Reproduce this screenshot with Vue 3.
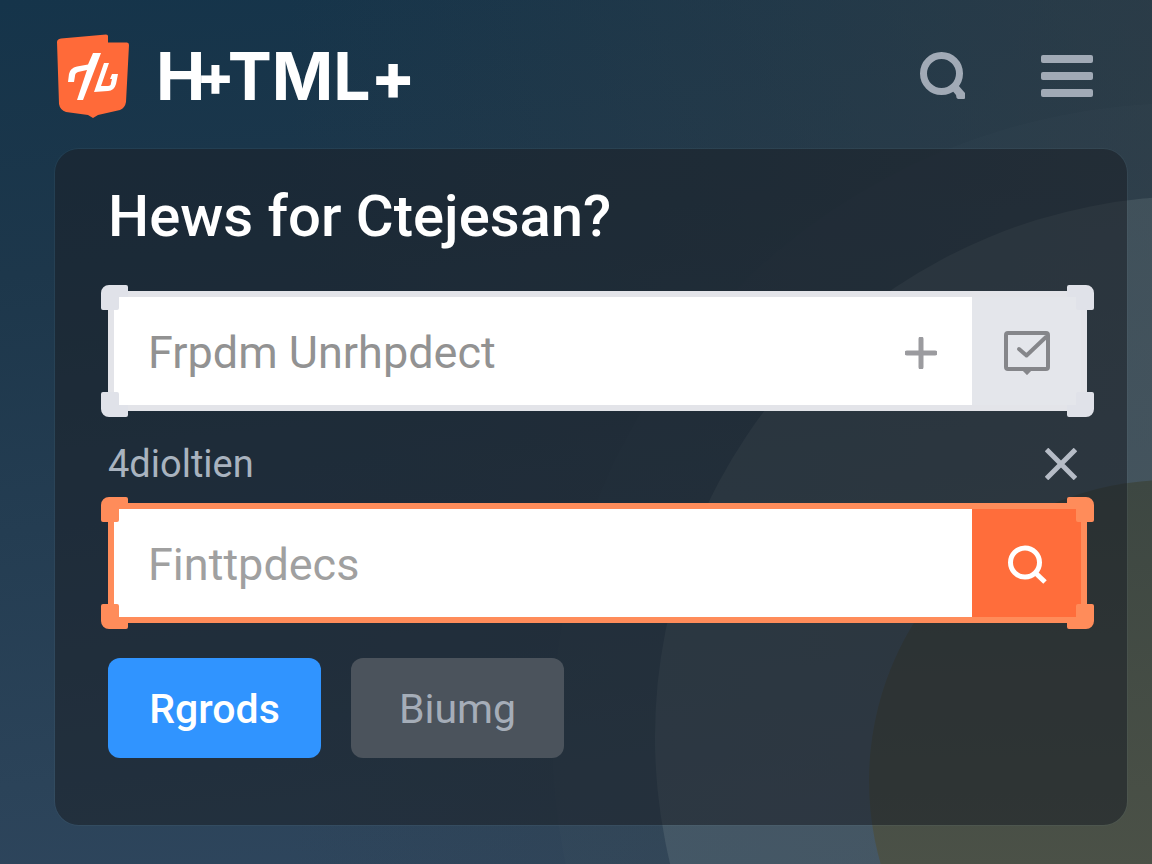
<script setup>
import { ref } from 'vue'

const project = ref('')
const query = ref('')
const corners = ['tl', 'tr', 'bl', 'br']
const cornerPath = 'M8 0H25a2 2 0 0 1 2 2V12H18V23a2 2 0 0 1-2 2H2a2 2 0 0 1-2-2V8a8 8 0 0 1 8-8z'
</script>

<template>
  <div class="page">
    <svg class="rings" width="640" height="864" viewBox="512 0 640 864" aria-hidden="true">
      <defs>
        <linearGradient id="moss" x1="0" y1="0" x2="0" y2="1">
          <stop offset="0" stop-color="#3d4742" />
          <stop offset="0.650" stop-color="#4b5147" />
        </linearGradient>
      </defs>
      <circle cx="1184" cy="735" r="632" fill="#fff" fill-opacity="0.012" />
      <circle cx="1196" cy="737" r="541" fill="#98a4a4" fill-opacity="0.18" />
      <circle cx="1170" cy="781" r="301" fill="url(#moss)" />
    </svg>

    <header class="bar">
      <a class="brand" href="#" aria-label="H+TML+">
        <svg class="logo" width="72" height="84" viewBox="0 0 72 84" aria-hidden="true">
          <path d="M0 8Q0 5 4 4.500L49 0.500Q51 0.500 51 2V8.500H70Q72 8.500 72 11L69 68Q68 74 63 76L41 81L36 84L31 81L9 78Q3 76 2 70Z" fill="#ff6a39" />
          <path d="M11 48L12 40Q13 34 20 32.500L31 30.500L36 19H44L26 66H20L30 36L21 38Q18 39 18 42L17 48Z" fill="#fff" />
          <path d="M47 29H52L44 52H51Q54 52 54 49L55 45H53L55 40H61L59 50Q57 57 51 57L37 58Z" fill="#fff" />
        </svg>
        <span class="word">H<span class="joint">+</span>TML<span class="plus">+</span></span>
      </a>
      <nav class="actions">
        <button class="icon" type="button" aria-label="Search">
          <svg width="46" height="48" viewBox="0 0 46 48">
            <circle cx="21.500" cy="21.500" r="18" fill="none" stroke="#a1aab6" stroke-width="7" />
            <path d="M31 37L38 33L45 41V46Q45 47 44 47H38Q36 46 36 43Z" fill="#a1aab6" />
          </svg>
        </button>
        <button class="icon" type="button" aria-label="Menu">
          <svg width="52" height="42" viewBox="0 0 52 42" fill="#a1aab6">
            <rect width="52" height="8" rx="2" />
            <rect y="17" width="52" height="8" rx="2" />
            <rect y="34" width="52" height="8" rx="2" />
          </svg>
        </button>
      </nav>
    </header>

    <main class="panel">
      <h1>Hews for Ctejesan?</h1>

      <div class="frame light">
        <div class="field">
          <input v-model="project" type="text" placeholder="Frpdm Unrhpdect" aria-label="Frpdm Unrhpdect" />
          <button class="add" type="button" aria-label="Add">
            <svg width="32" height="32" viewBox="0 0 32 32">
              <path d="M16 2V30M2 16H30" stroke="#9b9b9f" stroke-width="5" stroke-linecap="round" />
            </svg>
          </button>
        </div>
        <button class="addon" type="button" aria-label="Confirm">
          <svg width="46" height="44" viewBox="0 0 46 44" fill="none" stroke="#85868a">
            <rect x="2" y="2" width="42" height="36" rx="2" stroke-width="4" />
            <path d="M15 18L22.500 24.500L42 6" stroke-width="4" stroke-linejoin="round" stroke-linecap="round" />
            <path d="M19 38L23 42L27 38" stroke-width="3" />
          </svg>
        </button>
        <svg v-for="c in corners" :key="c" class="corner" :class="c" width="27" height="25" viewBox="0 0 27 25" aria-hidden="true">
          <path :d="cornerPath" />
        </svg>
      </div>

      <div class="row">
        <label for="query">4dioltien</label>
        <button class="icon" type="button" aria-label="Clear">
          <svg width="32" height="32" viewBox="0 0 32 32">
            <path d="M1.500 1.500L30.500 30.500M30.500 1.500L1.500 30.500" stroke="#b6bcc6" stroke-width="5" />
          </svg>
        </button>
      </div>

      <div class="frame warm">
        <div class="field">
          <input id="query" v-model="query" type="text" placeholder="Finttpdecs" />
        </div>
        <button class="addon" type="button" aria-label="Find">
          <svg width="40" height="40" viewBox="0 0 40 40" fill="none" stroke="#fff">
            <circle cx="18" cy="17.500" r="14.500" stroke-width="5" />
            <path d="M27.500 27L38 37" stroke-width="5" />
          </svg>
        </button>
        <svg v-for="c in corners" :key="c" class="corner" :class="c" width="27" height="25" viewBox="0 0 27 25" aria-hidden="true">
          <path :d="cornerPath" />
        </svg>
      </div>

      <div class="buttons">
        <button class="btn primary" type="button">Rgrods</button>
        <button class="btn muted" type="button">Biumg</button>
      </div>
    </main>
  </div>
</template>

<style>
body {
  margin: 0;
}
</style>

<style scoped>
.page {
  position: relative;
  display: flex;
  flex-direction: column;
  box-sizing: border-box;
  min-height: 100vh;
  padding: 0 25px 39px 55px;
  overflow: hidden;
  font-family: Roboto, "Liberation Sans", sans-serif;
  background:
    linear-gradient(90deg, rgba(54, 64, 70, 0) 25%, rgba(54, 64, 70, 0.6) 100%),
    linear-gradient(174deg, #15344a 0%, #1d374b 28%, #2b4359 80%, #30475f 100%);
}
.rings {
  position: absolute;
  right: 0;
  bottom: 0;
}
button {
  display: flex;
  align-items: center;
  justify-content: center;
  padding: 0;
  border: 0;
  background: none;
  font: inherit;
  cursor: pointer;
}
.bar {
  position: relative;
  display: flex;
  align-items: center;
  justify-content: space-between;
  height: 149px;
  padding: 2px 34px 0 2px;
  box-sizing: border-box;
}
.brand {
  display: flex;
  align-items: center;
  gap: 27px;
  color: #fff;
  text-decoration: none;
}
.word {
  display: flex;
  align-items: center;
  font: 700 66px/80px Inter, sans-serif;
}
.joint {
  margin: 0 -7px 0 -9px;
  font-size: 56px;
  font-weight: 800;
}
.plus {
  font-size: 66px;
  font-weight: 800;
}
.actions {
  display: flex;
  align-items: center;
  gap: 75px;
}
.panel {
  position: relative;
  flex: 1;
  box-sizing: border-box;
  padding: 31px 40px 67px 53px;
  border-radius: 24px;
  background: rgba(26, 32, 39, 0.56);
  box-shadow: 0 0 0 1px rgba(120, 150, 160, 0.1);
}
h1 {
  margin: 0 0 39px;
  color: #fff;
  font-size: 58px;
  line-height: 72px;
  font-weight: 500;
}
.frame {
  position: relative;
  display: flex;
  box-sizing: border-box;
  height: 120px;
  border: 6px solid;
}
.light {
  border-color: #e3e4e9;
  color: #e0e2e9;
}
.warm {
  border-color: #ff8c5a;
  color: #ff8c5a;
}
.field {
  display: flex;
  flex: 1;
  align-items: center;
  min-width: 0;
  padding: 0 35px 0 34px;
  background: #fff;
}
input {
  flex: 1;
  min-width: 0;
  height: 60px;
  padding: 2px 0 0;
  box-sizing: border-box;
  border: 0;
  outline: 0;
  background: none;
  color: #555;
  font: 400 45px/58px Roboto, "Liberation Sans", sans-serif;
}
input::placeholder {
  color: #929292;
  opacity: 1;
}
.warm input::placeholder {
  color: #a0a0a0;
}
.add {
  padding-top: 3px;
}
.addon {
  width: 109px;
  padding-top: 4px;
}
.light .addon {
  background: #e4e6eb;
}
.warm .addon {
  background: #ff6d3b;
}
.corner {
  position: absolute;
  fill: currentColor;
}
.tl {
  top: -12px;
  left: -13px;
}
.tr {
  top: -12px;
  right: -13px;
  transform: scaleX(-1);
}
.bl {
  bottom: -12px;
  left: -13px;
  transform: scaleY(-1);
}
.br {
  right: -13px;
  bottom: -12px;
  transform: scale(-1, -1);
}
.row {
  display: flex;
  align-items: center;
  justify-content: space-between;
  height: 46px;
  margin: 30px 0 16px;
  padding-right: 10px;
}
label {
  color: #a9b3bf;
  font-size: 38px;
  line-height: 46px;
}
.buttons {
  display: flex;
  gap: 30px;
  margin-top: 35px;
}
.btn {
  min-width: 213px;
  height: 100px;
  padding-top: 2px;
  border-radius: 12px;
  font-size: 41px;
  line-height: 50px;
}
.primary {
  background: #3094ff;
  color: #fff;
  font-weight: 500;
}
.muted {
  background: #4b535c;
  color: #a5adb8;
}
</style>
